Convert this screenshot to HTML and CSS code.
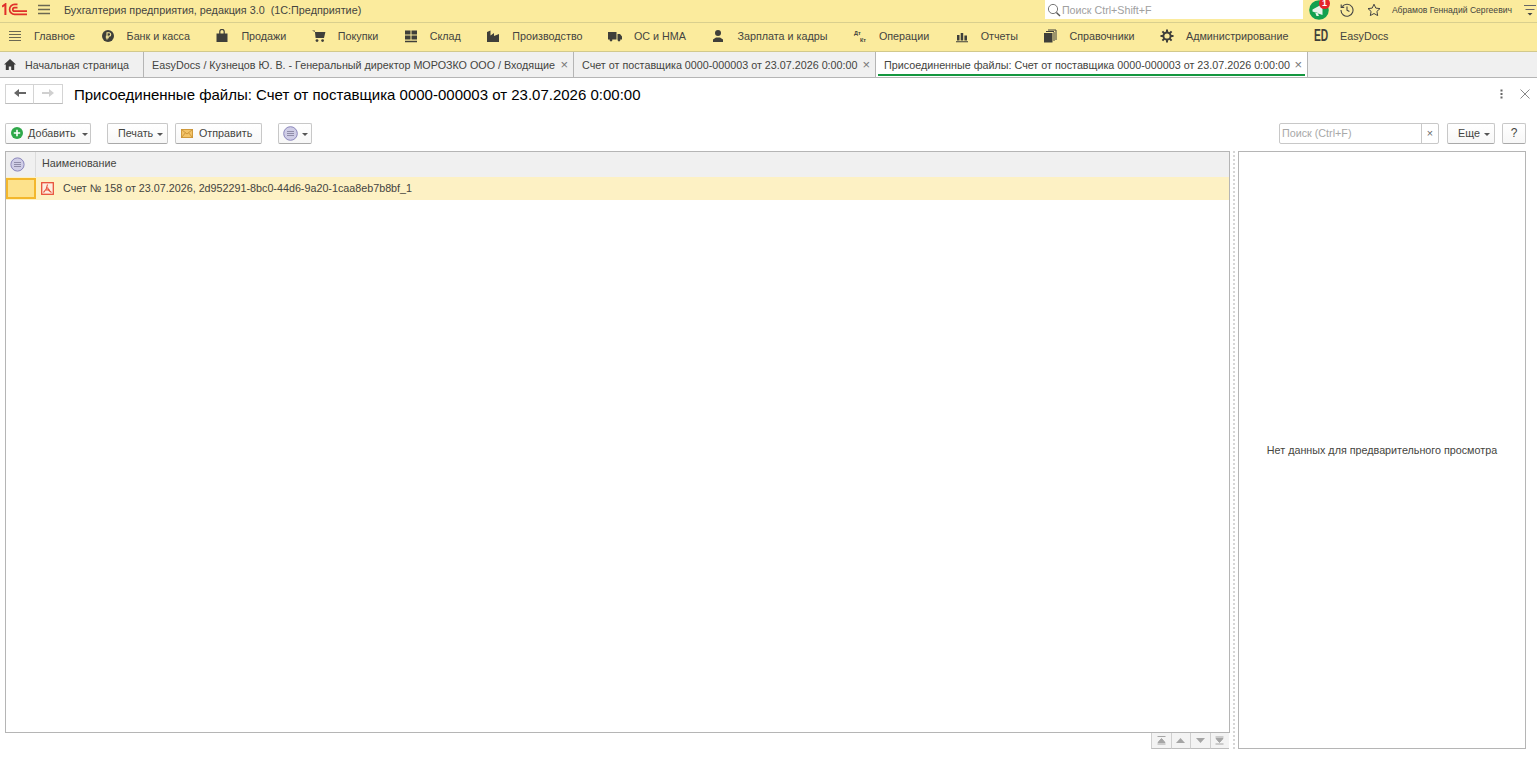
FILE: index.html
```html
<!DOCTYPE html>
<html lang="ru">
<head>
    <meta charset="UTF-8">
    <title>Присоединенные файлы</title>
    <link rel="stylesheet" href="styles.css">
</head>
<body>
    <!-- top bar -->
    <header class="topbar">
        <svg class="logo" width="25" height="13" viewBox="0 0 25 13">
            <path d="M0 3.6L3.4 1.2V12" fill="none" stroke="#e0302a" stroke-width="2"/>
            <path d="M15.5 1.4H12.6A5 5 0 0 0 12.6 11.4H25" fill="none" stroke="#e0302a" stroke-width="1.7"/>
            <path d="M15.5 4.6H12.6A1.8 1.8 0 0 0 12.6 8.2H25" fill="none" stroke="#e0302a" stroke-width="1.7"/>
        </svg>
        <svg class="burger" width="12" height="11" viewBox="0 0 12 11">
            <path d="M0 1.5H12M0 5.5H12M0 9.5H12" stroke="#6b6852" stroke-width="1.3"/>
        </svg>
        <span class="app-title">Бухгалтерия предприятия, редакция 3.0&nbsp; (1С:Предприятие)</span>
        <div class="global-search">
            <svg width="14" height="14" viewBox="0 0 14 14">
                <circle cx="6" cy="6" r="4.6" fill="none" stroke="#777" stroke-width="1"/>
                <path d="M9.4 9.4L13 13" stroke="#555" stroke-width="1.4"/>
            </svg>
            <span>Поиск Ctrl+Shift+F</span>
        </div>
        <div class="bell">
            <svg width="20" height="20" viewBox="0 0 20 20">
                <circle cx="10" cy="10" r="9.8" fill="#12a04e"/>
                <path d="M3.5 9.5L13.5 4V15L3.5 11.5Z M6 12L7.5 16H10L8.5 12.8Z" fill="#e9f3ea"/>
            </svg>
            <span class="badge">1</span>
        </div>
        <svg class="top-icon" width="14" height="14" viewBox="0 0 14 14">
            <path d="M2.2 3.6A6 6 0 1 1 1 7" fill="none" stroke="#444" stroke-width="1.1"/>
            <path d="M1.2 1.4V4.4H4.2" fill="none" stroke="#444" stroke-width="1.1"/>
            <path d="M7 3.6V7.2L9.4 8.6" fill="none" stroke="#444" stroke-width="1.1"/>
        </svg>
        <svg class="top-icon star" width="14" height="14" viewBox="0 0 14 14">
            <path d="M7 1.2L8.8 5.1L13 5.6L9.9 8.4L10.7 12.6L7 10.5L3.3 12.6L4.1 8.4L1 5.6L5.2 5.1Z" fill="none" stroke="#444" stroke-width="1"/>
        </svg>
        <span class="user">Абрамов Геннадий Сергеевич</span>
        <svg class="user-menu" width="12" height="14" viewBox="0 0 12 14">
            <path d="M0 2.5H12M1.5 6.5H10.5" stroke="#666" stroke-width="1.1"/>
            <path d="M3.5 10H8.5L6 12.6Z" fill="#444"/>
        </svg>
    </header>

    <!-- sections -->
    <nav class="menubar">
        <a class="menu-item">
            <svg class="menu-icon" viewBox="0 0 14 14"><path d="M1 2.5H13M1 5.5H13M1 8.5H13M1 11.5H13" stroke="#6b6852" stroke-width="1.1"/></svg>
            Главное
        </a>
        <a class="menu-item">
            <svg class="menu-icon" viewBox="0 0 14 14"><circle cx="7" cy="7" r="6" fill="#3f3f3a"/><path d="M6 10.5V3.8H8A1.7 1.7 0 0 1 8 7.2H4.8M4.8 8.8H8" fill="none" stroke="#fbeb9d" stroke-width="1.1"/></svg>
            Банк и касса
        </a>
        <a class="menu-item">
            <svg class="menu-icon" viewBox="0 0 14 14"><path d="M1.5 4.5H12.5V13H1.5Z" fill="#3f3f3a"/><path d="M4.8 6V2.6A2.2 2.2 0 0 1 9.2 2.6V6" fill="none" stroke="#3f3f3a" stroke-width="1.2"/></svg>
            Продажи
        </a>
        <a class="menu-item">
            <svg class="menu-icon" viewBox="0 0 14 14"><path d="M0 1.5H2.8L3.6 9H12L13.4 3H3Z" fill="#3f3f3a"/><circle cx="5" cy="11.6" r="1.4" fill="#3f3f3a"/><circle cx="10.6" cy="11.6" r="1.4" fill="#3f3f3a"/></svg>
            Покупки
        </a>
        <a class="menu-item">
            <svg class="menu-icon" viewBox="0 0 14 14"><path d="M1 1.5H6.5V5.5H1ZM7.5 1.5H13V5.5H7.5ZM1 6.5H6.5V10.5H1ZM7.5 6.5H13V10.5H7.5ZM1 11.7H13V13.2H1Z" fill="#3f3f3a"/></svg>
            Склад
        </a>
        <a class="menu-item">
            <svg class="menu-icon" viewBox="0 0 14 14"><path d="M1 13V3L4.5 1.5V6.5L8 4V7L13 5V13Z" fill="#3f3f3a"/></svg>
            Производство
        </a>
        <a class="menu-item">
            <svg class="menu-icon" viewBox="0 0 14 14"><path d="M0 3H8.5V10.5H0ZM9.5 5H12L14 7.5V10.5H9.5Z" fill="#3f3f3a"/><circle cx="3" cy="11" r="1.4" fill="#3f3f3a"/><circle cx="11" cy="11" r="1.4" fill="#3f3f3a"/></svg>
            ОС и НМА
        </a>
        <a class="menu-item">
            <svg class="menu-icon" viewBox="0 0 14 14"><circle cx="7" cy="4" r="3" fill="#3f3f3a"/><path d="M2 13V10.5L5 8.5H9L12 10.5V13Z" fill="#3f3f3a"/></svg>
            Зарплата и кадры
        </a>
        <a class="menu-item">
            <svg class="menu-icon" viewBox="0 0 14 14">
                <text class="dt-kt" x="1" y="6">Дт</text>
                <text class="dt-kt" x="7" y="12.5">Кт</text>
            </svg>
            Операции
        </a>
        <a class="menu-item">
            <svg class="menu-icon" viewBox="0 0 14 14"><path d="M2 6H4.5V11.5H2ZM5.7 4H8.2V11.5H5.7ZM9.4 6.5H12V11.5H9.4ZM1 12.3H13V13.2H1Z" fill="#3f3f3a"/></svg>
            Отчеты
        </a>
        <a class="menu-item">
            <svg class="menu-icon" viewBox="0 0 14 14"><path d="M1 4H9.5V13.5H1Z" fill="#3f3f3a"/><path d="M11 3V12M13 1V11M3 2.5H11M5 1H13" fill="none" stroke="#3f3f3a" stroke-width="1"/></svg>
            Справочники
        </a>
        <a class="menu-item">
            <svg class="menu-icon" viewBox="0 0 14 14"><circle cx="7" cy="7" r="3.6" fill="none" stroke="#3f3f3a" stroke-width="2"/><path d="M7 .5V3M7 11V13.5M.5 7H3M11 7H13.5M2.4 2.4L4.2 4.2M9.8 9.8L11.6 11.6M11.6 2.4L9.8 4.2M4.2 9.8L2.4 11.6" stroke="#3f3f3a" stroke-width="2"/></svg>
            Администрирование
        </a>
        <a class="menu-item">
            <span class="menu-icon ed-mark">ED</span>
            EasyDocs
        </a>
    </nav>

    <!-- open tabs -->
    <div class="tabs">
        <div class="tab tab-home">
            <svg width="12" height="11" viewBox="0 0 12 11"><path d="M6 0L12 5.6H10.2V11H7.2V7.4H4.8V11H1.8V5.6H0Z" fill="#3c3c3c"/></svg>
            <span>Начальная страница</span>
        </div>
        <div class="tab tab-list"><span>EasyDocs / Кузнецов Ю. В. - Генеральный директор МОРОЗКО ООО / Входящие</span><i class="tab-close">×</i></div>
        <div class="tab tab-doc"><span>Счет от поставщика 0000-000003 от 23.07.2026 0:00:00</span><i class="tab-close">×</i></div>
        <div class="tab tab-active"><span>Присоединенные файлы: Счет от поставщика 0000-000003 от 23.07.2026 0:00:00</span><i class="tab-close">×</i></div>
    </div>

    <main class="form">
        <div class="form-head">
            <div class="history">
                <button class="hist-btn"><svg width="12" height="10" viewBox="0 0 12 10"><path d="M0 5L5 1V4H12V6H5V9Z" fill="#666"/></svg></button>
                <button class="hist-btn"><svg width="12" height="10" viewBox="0 0 12 10"><path d="M12 5L7 1V4H0V6H7V9Z" fill="#d0d0d0"/></svg></button>
            </div>
            <h1 class="form-title">Присоединенные файлы: Счет от поставщика 0000-000003 от 23.07.2026 0:00:00</h1>
            <svg class="form-more" width="3" height="10" viewBox="0 0 3 10"><path d="M0.5 0.5H2.5V2.5H0.5ZM0.5 4H2.5V6H0.5ZM0.5 7.5H2.5V9.5H0.5Z" fill="#666"/></svg>
            <svg class="form-close" width="10" height="10" viewBox="0 0 10 10"><path d="M.5 .5L9.5 9.5M9.5 .5L.5 9.5" stroke="#888" stroke-width="1"/></svg>
        </div>

        <div class="toolbar">
            <button class="btn btn-add">
                <svg width="12" height="12" viewBox="0 0 12 12"><circle cx="6" cy="6" r="6" fill="#2fa84a"/><path d="M6 2.8V9.2M2.8 6H9.2" stroke="#fff" stroke-width="1.6"/></svg>
                Добавить <i class="caret"></i>
            </button>
            <button class="btn btn-print">Печать <i class="caret"></i></button>
            <button class="btn btn-send">
                <svg width="12" height="9" viewBox="0 0 12 9"><rect x=".5" y=".5" width="11" height="8" fill="#f3c468" stroke="#d09a3c"/><path d="M.5 .5L6 5L11.5 .5M.5 8.5L4.4 3.8M11.5 8.5L7.6 3.8" fill="none" stroke="#c58c30" stroke-width=".8"/></svg>
                Отправить
            </button>
            <button class="btn btn-status">
                <svg width="15" height="15" viewBox="0 0 15 15"><circle cx="7.5" cy="7.5" r="6.8" fill="#cfcde6" stroke="#8a86bb"/><path d="M4 5.5H11M4 7.5H11M4 9.5H11" stroke="#8f8ca8" stroke-width="1"/></svg>
                <i class="caret"></i>
            </button>
            <div class="toolbar-right">
                <div class="search">
                    <span class="search-text">Поиск (Ctrl+F)</span>
                    <span class="search-clear">×</span>
                </div>
                <button class="btn btn-more">Еще <i class="caret"></i></button>
                <button class="btn btn-help">?</button>
            </div>
        </div>

        <div class="content">
            <section class="list-pane">
                <div class="table">
                    <div class="table-head">
                        <div class="col-mark">
                            <svg width="15" height="15" viewBox="0 0 15 15"><circle cx="7.5" cy="7.5" r="6.6" fill="#cfcde6" stroke="#8a86bb"/><path d="M4 5.5H11M4 7.5H11M4 9.5H11" stroke="#8f8ca8" stroke-width="1"/></svg>
                        </div>
                        <div class="col-name">Наименование</div>
                    </div>
                    <div class="table-row">
                        <div class="cell-mark"></div>
                        <svg class="pdf-icon" width="13" height="13" viewBox="0 0 13 13">
                            <rect x=".7" y=".7" width="11.6" height="11.6" fill="#fdeee0" stroke="#e8503a" stroke-width="1.3"/>
                            <path d="M6.5 2.5C6.2 5.5 4.5 8.5 2.5 10.5M6.5 5.5C7 7.5 8.5 9.5 10.5 10.5M4.5 8H9" fill="none" stroke="#e8503a" stroke-width="1.1"/>
                        </svg>
                        <span>Счет № 158 от 23.07.2026, 2d952291-8bc0-44d6-9a20-1caa8eb7b8bf_1</span>
                    </div>
                </div>
                <div class="pager">
                    <button class="page-btn"><svg width="11" height="9" viewBox="0 0 11 9"><path d="M1.5 .5H9.5M5.5 2.5L9 6.5H2ZM1.5 8H9.5" fill="#a5a5a5" stroke="#a5a5a5"/></svg></button>
                    <button class="page-btn"><svg width="11" height="9" viewBox="0 0 11 9"><path d="M5.5 2L10 7H1Z" fill="#a5a5a5"/></svg></button>
                    <button class="page-btn"><svg width="11" height="9" viewBox="0 0 11 9"><path d="M5.5 7L10 2H1Z" fill="#a5a5a5"/></svg></button>
                    <button class="page-btn"><svg width="11" height="9" viewBox="0 0 11 9"><path d="M1.5 1H9.5M2 2.5H9L5.5 6.5ZM1.5 8H9.5" fill="#a5a5a5" stroke="#a5a5a5"/></svg></button>
                </div>
            </section>
            <div class="splitter"></div>
            <aside class="preview">Нет данных для предварительного просмотра</aside>
        </div>
    </main>
</body>
</html>
```

FILE: styles.css
```css
/* basic */
html, body {
    margin: 0;
    height: 100%;
}

body {
    display: flex;
    flex-direction: column;
    height: 762px;
    overflow: hidden;
    background: #fff;
    color: #444440;
    font-family: "Liberation Sans", Arial, sans-serif;
    font-size: 10.75px;
}

button {
    font: inherit;
    color: inherit;
}

/* top bar */
.topbar {
    display: flex;
    align-items: center;
    height: 19px;
    padding-bottom: 3px;
    flex: none;
    background: #fbeb9d;
    border-bottom: 1px solid #d9cf8e;
}

.logo {
    margin-left: 2px;
}

.burger {
    margin-left: 11px;
}

.app-title {
    margin-left: 14px;
    flex: 1;
    font-size: 10.8px;
    white-space: pre;
}

.global-search {
    display: flex;
    align-items: center;
    gap: 1px;
    width: 256px;
    height: 19px;
    padding-left: 2px;
    background: #fff;
    color: #a0a0a0;
    font-size: 10.7px;
}

.bell {
    position: relative;
    width: 20px;
    height: 20px;
    margin-left: 6px;
}

.badge {
    position: absolute;
    top: -2px;
    right: -1px;
    width: 11px;
    height: 11px;
    border-radius: 50%;
    background: #e5242a;
    color: #fff;
    font-size: 9px;
    font-weight: bold;
    line-height: 11px;
    text-align: center;
}

.top-icon {
    margin-left: 11px;
}

.star {
    margin-left: 13px;
}

.user {
    margin-left: 11px;
    font-size: 8.6px;
}

.user-menu {
    margin: 0 0 0 12px;
    padding-right: 1px;
}

/* sections */
.menubar {
    display: flex;
    align-items: center;
    gap: 25.5px;
    height: 26px;
    padding: 0 0 2px 8px;
    flex: none;
    background: #fbeb9d;
    border-bottom: 1px solid #d2c98c;
}

.menu-item {
    display: flex;
    align-items: center;
    gap: 12px;
    white-space: nowrap;
}

.menu-icon {
    width: 14px;
    height: 14px;
    flex: none;
}

.dt-kt {
    font-size: 5.5px;
    font-weight: bold;
    fill: #3f3f3a;
}

.ed-mark {
    color: #3f3f3a;
    font-size: 17px;
    font-weight: bold;
    line-height: 14px;
    transform: scaleX(.6);
    transform-origin: left center;
}

/* tabs */
.tabs {
    display: flex;
    height: 25px;
    flex: none;
    background: #f0f0f0;
    border-bottom: 1px solid #b5b5b5;
}

.tab {
    display: flex;
    align-items: center;
    position: relative;
    padding-left: 8px;
    border-right: 1px solid #b5b5b5;
    white-space: nowrap;
}

.tab-home {
    gap: 9px;
    width: 139px;
    padding-left: 4px;
}

.tab-list {
    width: 421px;
}

.tab-doc {
    width: 293px;
}

.tab-active {
    width: 423px;
    background: #fff;
}

.tab-active::after {
    content: "";
    position: absolute;
    left: 2px;
    right: 2px;
    bottom: 1px;
    height: 2px;
    background: #14973f;
}

.tab-close {
    margin-left: auto;
    margin-right: 5px;
    color: #777;
    font-size: 13px;
    font-style: normal;
    line-height: 11px;
}

/* form */
.form {
    display: flex;
    flex-direction: column;
    flex: 1;
    min-height: 0;
    padding: 0 11px 13px 5px;
}

.form-head {
    display: flex;
    align-items: center;
    height: 32px;
    padding-bottom: 2px;
    flex: none;
}

.history {
    display: flex;
    margin-right: 11px;
}

.hist-btn {
    width: 29px;
    height: 20px;
    padding: 0;
    background: #fff;
    border: 1px solid #d4d4d4;
    border-bottom-color: #bdbdbd;
}

.hist-btn + .hist-btn {
    border-left: 0;
}

.form-title {
    flex: 1;
    margin: 0;
    color: #000;
    font-size: 15px;
    font-weight: normal;
}

.form-more {
    margin-right: 17px;
}

.form-close {
    margin-right: -4px;
}

.toolbar {
    display: flex;
    align-items: center;
    height: 21px;
    margin-top: 11px;
    flex: none;
}

.btn {
    display: flex;
    align-items: center;
    height: 21px;
    padding: 0 0 1px;
    background: linear-gradient(#fff, #f7f7f7);
    border: 1px solid #c8c8c8;
    border-bottom-color: #a9a9a9;
    border-radius: 2px;
}

.caret {
    display: inline-block;
    margin-top: 2px;
    border-top: 3px solid #555;
    border-left: 3px solid transparent;
    border-right: 3px solid transparent;
}

.btn-add {
    gap: 5px;
    width: 86px;
    padding-left: 5px;
}

.btn-add .caret {
    margin-left: 1px;
}

.btn-print {
    gap: 4px;
    width: 61px;
    margin-left: 16px;
    padding-left: 10px;
}

.btn-send {
    gap: 6px;
    width: 87px;
    margin-left: 7px;
    padding-left: 5px;
}

.btn-status {
    gap: 4px;
    width: 34px;
    margin-left: 16px;
    padding-left: 4px;
}

.toolbar-right {
    display: flex;
    align-items: center;
    margin-left: auto;
}

.search {
    display: flex;
    width: 160px;
    height: 21px;
    box-sizing: border-box;
    background: #fff;
    border: 1px solid #c8c8c8;
    border-radius: 2px;
}

.search-text {
    flex: 1;
    padding-left: 2px;
    color: #a8a8a8;
    line-height: 19px;
}

.search-clear {
    width: 16px;
    border-left: 1px solid #c8c8c8;
    color: #666;
    line-height: 18px;
    text-align: center;
}

.btn-more {
    gap: 4px;
    width: 48px;
    margin-left: 8px;
    padding-left: 10px;
}

.btn-help {
    justify-content: center;
    width: 24px;
    margin-left: 7px;
    font-size: 12px;
}

/* table + preview */
.content {
    display: flex;
    flex: 1;
    min-height: 0;
    margin-top: 7px;
}

.list-pane {
    display: flex;
    flex-direction: column;
    width: 1225px;
    flex: none;
}

.table {
    flex: 1;
    box-sizing: border-box;
    border: 1px solid #b5b5b5;
}

.table-head {
    display: flex;
    height: 25px;
    background: #f0f0f0;
}

.col-mark {
    display: flex;
    align-items: center;
    width: 25px;
    padding-left: 4px;
    border-right: 1px solid #dcdcdc;
}

.col-name {
    padding-left: 6px;
    line-height: 23px;
}

.table-row {
    display: flex;
    align-items: center;
    height: 22px;
    padding-bottom: 1px;
    background: #fdf1c4;
}

.cell-mark {
    width: 26px;
    height: 17px;
    background: #fde28c;
    border: 2px solid #f3b72c;
}

.pdf-icon {
    margin: 0 9px 0 5px;
}

.pager {
    display: flex;
    justify-content: flex-end;
    flex: none;
    height: 16px;
    margin-right: 1px;
}

.page-btn {
    display: flex;
    align-items: center;
    justify-content: center;
    width: 19.5px;
    padding: 0;
    background: #f3f3f3;
    border: 0;
    border-left: 1px solid #cfcfcf;
    border-bottom: 1px solid #bdbdbd;
}

.splitter {
    width: 2px;
    margin: 0 3px;
    border-left: 2px dotted #d6d6d6;
    box-sizing: border-box;
}

.preview {
    display: flex;
    align-items: center;
    justify-content: center;
    flex: 1;
    border: 1px solid #b5b5b5;
}
```
